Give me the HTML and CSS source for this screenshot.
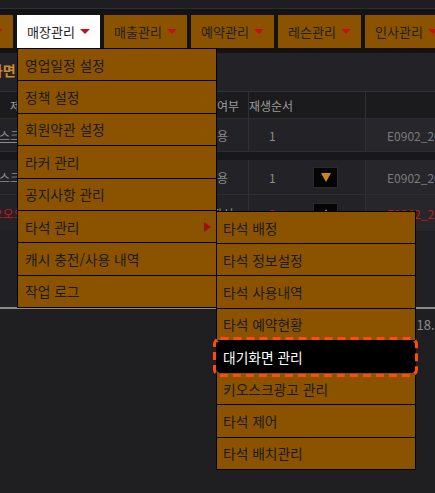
FILE: index.html
```html
<!DOCTYPE html>
<html lang="ko">
<head>
<meta charset="utf-8">
<title>대기화면 관리</title>
<link rel="stylesheet" href="styles.css">
</head>
<body>
<div class="page">
  <div class="topband"></div>
  <nav class="nav">
    <div class="nav-item">환경설정<span class="caret"></span></div>
    <div class="nav-item active">매장관리<span class="caret"></span>
      <ul class="menu">
        <li class="menu-item">영업일정 설정</li>
        <li class="menu-item">정책 설정</li>
        <li class="menu-item">회원약관 설정</li>
        <li class="menu-item">라커 관리</li>
        <li class="menu-item">공지사항 관리</li>
        <li class="menu-item has-sub">타석 관리<span class="arrow-right"></span>
          <ul class="menu sub">
            <li class="menu-item">타석 배정</li>
            <li class="menu-item">타석 정보설정</li>
            <li class="menu-item">타석 사용내역</li>
            <li class="menu-item">타석 예약현황</li>
            <li class="menu-item current">대기화면 관리<svg class="mark" viewBox="0 0 205 40" width="205" height="40"><rect x="1.5" y="1.5" width="202" height="37" rx="6" ry="6" fill="none" stroke="#ff4a12" stroke-width="3" stroke-dasharray="8 5"/></svg></li>
            <li class="menu-item">키오스크광고 관리</li>
            <li class="menu-item">타석 제어</li>
            <li class="menu-item">타석 배치관리</li>
          </ul>
        </li>
        <li class="menu-item">캐시 충전/사용 내역</li>
        <li class="menu-item">작업 로그</li>
      </ul>
    </div>
    <div class="nav-item">매출관리<span class="caret"></span></div>
    <div class="nav-item">예약관리<span class="caret"></span></div>
    <div class="nav-item">레슨관리<span class="caret"></span></div>
    <div class="nav-item">인사관리<span class="caret"></span></div>
  </nav>
  <main class="content">
    <h2 class="title">대기화면 관리</h2>
    <div class="row thead">
      <div class="cell">No</div>
      <div class="cell">제목</div>
      <div class="cell">구분</div>
      <div class="cell">사용여부</div>
      <div class="cell c-order">재생순서</div>
      <div class="cell c-file head-file">파일명</div>
    </div>
    <div class="row tr r1">
      <div class="cell">1</div>
      <div class="cell c-name"><span class="link">키오스크 광고</span></div>
      <div class="cell">이미지</div>
      <div class="cell">사용</div>
      <div class="cell c-order"><span class="num">1</span></div>
      <div class="cell c-file">E0902_20220118.jpg</div>
    </div>
    <div class="band"></div>
    <div class="row tr r2">
      <div class="cell">2</div>
      <div class="cell c-name">키오스크 광고</div>
      <div class="cell">이미지</div>
      <div class="cell">사용</div>
      <div class="cell c-order"><span class="num">1</span><span class="btn"><span class="tri-down"></span></span></div>
      <div class="cell c-file">E0902_20220118.jpg</div>
    </div>
    <div class="row tr r3 red">
      <div class="cell">3</div>
      <div class="cell c-name">새 오오오 광고</div>
      <div class="cell">이미지</div>
      <div class="cell gray">비활성</div>
      <div class="cell c-order"><span class="num">2</span><span class="btn"><span class="tri-up"></span></span></div>
      <div class="cell c-file">E0902_20220118.jpg</div>
    </div>
    <div class="filler"></div>
  </main>
  <div class="sep"></div>
  <div class="row foot">
    <div class="cell"></div>
    <div class="cell"></div>
    <div class="cell"></div>
    <div class="cell"></div>
    <div class="cell"></div>
    <div class="cell c-date">2022.01.18.</div>
  </div>
</div>
</body>
</html>
```

FILE: styles.css
```css
* { box-sizing: border-box; }
html, body { margin: 0; padding: 0; overflow: hidden; }
body {
  width: 435px;
  height: 493px;
  background: #1f1e21;
  font-family: "Noto Sans CJK KR", "Noto Sans", sans-serif;
  font-size: 12px;
  color: #8c8c8c;
}
.page { width: 700px; margin-left: -70px; }

.topband { height: 9px; background: #1e1d21; border-bottom: 1px solid #2e2d32; }

.nav { display: flex; gap: 4px; padding: 6px 0 5px; background: #131215; }
.nav-item {
  position: relative;
  flex: none;
  width: 83px;
  height: 33px;
  display: flex;
  align-items: center;
  justify-content: center;
  gap: 5px;
  background: #8b5300;
  color: #1e1e1e;
  font-size: 13px;
  white-space: nowrap;
}
.nav-item.active { background: #ffffff; z-index: 5; }
.caret {
  width: 0; height: 0;
  border-left: 5px solid transparent;
  border-right: 5px solid transparent;
  border-top: 5px solid #c3101c;
}

.menu {
  list-style: none;
  margin: 0;
  padding: 0;
  position: absolute;
  top: 100%;
  left: 0;
  width: 200px;
  background: #8b5300;
  border: 1px solid #000;
  font-size: 13.75px;
  color: #1a1a1a;
}
.menu-item {
  position: relative;
  height: 32.4px;
  border-bottom: 1px solid #000;
  display: flex;
  align-items: center;
  justify-content: space-between;
  padding: 0 5px 0 7px;
  white-space: nowrap;
}
.menu-item:last-child { border-bottom: 0; height: 31.4px; }
.arrow-right {
  width: 0; height: 0;
  border-top: 5px solid transparent;
  border-bottom: 5px solid transparent;
  border-left: 7px solid #9b1010;
}
.menu.sub { top: 0; left: 100%; }
.sub .menu-item { height: 32.25px; padding-left: 6px; }
.sub .menu-item:last-child { height: 31.25px; }
.menu-item.current { background: #000; color: #fff; border-radius: 4px; }
.mark {
  position: absolute;
  left: -4px;
  top: -4px;
  overflow: visible;
  pointer-events: none;
}

.content { background: #232226; }
.title {
  margin: 0;
  height: 38px;
  padding-left: 34px;
  line-height: 34px;
  font-size: 14px;
  font-weight: 700;
  color: #d08a2a;
  white-space: nowrap;
}
.row { display: grid; grid-template-columns: 40px 102px 114px 62px 117px 265px; }
.cell {
  display: flex;
  align-items: center;
  justify-content: center;
  white-space: nowrap;
  overflow: hidden;
}
.thead {
  height: 28px;
  border-top: 1px solid #343337;
  border-bottom: 1px solid #2d2c30;
  background: #1b1a1d;
  color: #9a9a9a;
}
.head-file { color: transparent; }
.tr { height: 33px; border-bottom: 1px solid #2e2d31; }
.tr.r2 { height: 35px; }
.tr.r3 { height: 36px; border-bottom: 0; }
.band { height: 8px; background: #18171b; }
.c-order, .c-file { border-left: 1px solid #302f33; }
.c-name { justify-content: flex-start; padding-left: 7px; }
.link { text-decoration: underline; }
.tr .c-file { background: #27262a; justify-content: flex-start; padding-left: 21px; color: #7a7a7a; }
.c-order { justify-content: flex-start; }
.tr .c-order { padding-left: 20px; }
.num { width: 44px; }
.btn {
  width: 25px;
  height: 21px;
  background: #050505;
  border: 1px solid #2a2a2a;
  display: flex;
  align-items: center;
  justify-content: center;
}
.tri-down {
  width: 0; height: 0;
  border-left: 5px solid transparent;
  border-right: 5px solid transparent;
  border-top: 9px solid #c98a1c;
}
.tri-up {
  width: 0; height: 0;
  border-left: 5px solid transparent;
  border-right: 5px solid transparent;
  border-bottom: 9px solid #c98a1c;
}
.red { color: #c8141c; }
.red .c-file { color: #c8141c; }
.red .gray { color: #8c8c8c; }
.filler { height: 76px; background: #212024; }
.sep { height: 2px; background: #8a8a8a; }
.foot { padding-top: 6px; }
.c-date { justify-content: flex-start; padding-left: 1px; font-size: 13px; line-height: 20px; color: #8c8c8c; }
```
